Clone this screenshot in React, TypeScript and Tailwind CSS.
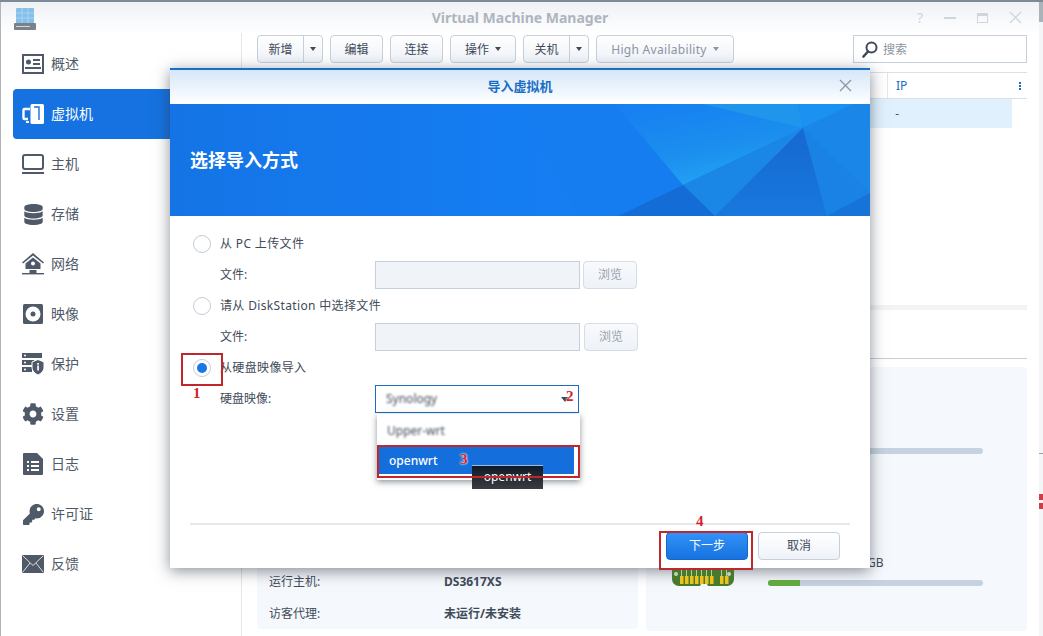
import { FaCog, FaDatabase, FaKey } from 'react-icons/fa'

const FONT = '[font-family:"Noto_Sans","Noto_Sans_CJK_SC",sans-serif]'

function OverviewIcon() {
  return (
    <svg width="22" height="20" viewBox="0 0 22 20" fill="none">
      <rect x="1" y="1" width="20" height="18" stroke="currentColor" strokeWidth="2" />
      <circle cx="6.5" cy="8" r="2.5" fill="currentColor" />
      <path d="M3 14h16" stroke="currentColor" strokeWidth="2" />
      <path d="M11 6h7M11 10h7" stroke="currentColor" strokeWidth="2" />
    </svg>
  )
}

function VmIcon() {
  return (
    <svg width="22" height="20" viewBox="0 0 22 20" fill="none">
      <path d="M8 5H2.5A1 1 0 0 0 1.5 6v8a1 1 0 0 0 1 1H6" stroke="currentColor" strokeWidth="2.4" />
      <rect x="4" y="17" width="3" height="2" fill="currentColor" />
      <path d="M10 0h10.5a1.5 1.5 0 0 1 1.5 1.5v17a1.5 1.5 0 0 1-1.5 1.5H10a1.5 1.5 0 0 1-1.5-1.5v-17A1.5 1.5 0 0 1 10 0Z" fill="currentColor" />
      <path d="M12 3h5v13" stroke="#1672e0" strokeWidth="1.4" />
    </svg>
  )
}

function HostIcon() {
  return (
    <svg width="22" height="21" viewBox="0 0 22 21" fill="none">
      <rect x="1" y="1" width="20" height="14" rx="2" stroke="currentColor" strokeWidth="2" />
      <rect x="0" y="18" width="22" height="2" fill="currentColor" />
    </svg>
  )
}

function NetworkIcon() {
  return (
    <svg width="22" height="22" viewBox="0 0 22 22" fill="none">
      <path d="M11 0 0 9.5l1 1L11 2.5l10 8 1-1Z" fill="currentColor" />
      <path d="M11 4.5 3.5 10.5V16h15v-5.500Z" fill="currentColor" />
      <circle cx="11" cy="10.500" r="2" fill="white" />
      <rect x="7.500" y="17" width="7" height="3.500" fill="currentColor" />
      <rect x="0" y="20" width="22" height="1.400" fill="currentColor" />
    </svg>
  )
}

function ImageIcon() {
  return (
    <svg width="20" height="20" viewBox="0 0 20 20">
      <rect width="20" height="20" rx="1.500" fill="currentColor" />
      <circle cx="10" cy="10" r="7.500" fill="white" />
      <circle cx="10" cy="10" r="2.500" fill="currentColor" />
    </svg>
  )
}

function ProtectIcon() {
  return (
    <svg width="22" height="22" viewBox="0 0 22 22">
      <rect x="0" y="0" width="20" height="5" fill="currentColor" />
      <rect x="0" y="7" width="12" height="5" fill="currentColor" />
      <rect x="0" y="14" width="10" height="5" fill="currentColor" />
      <path d="M16 6.500 22 9v5c0 4-3 6.500-6 8-3-1.500-6-4-6-8V9Z" fill="currentColor" stroke="white" strokeWidth="1" />
      <rect x="15.200" y="10" width="1.700" height="1.700" fill="white" />
      <rect x="15.200" y="12.500" width="1.700" height="5" fill="white" />
      <circle cx="3" cy="2.500" r="1" fill="white" />
      <circle cx="3" cy="9.500" r="1" fill="white" />
      <circle cx="3" cy="16.500" r="1" fill="white" />
    </svg>
  )
}

function LogIcon() {
  return (
    <svg width="20" height="22" viewBox="0 0 20 22">
      <path d="M1 0h13l6 6v15a1 1 0 0 1-1 1H1a1 1 0 0 1-1-1V1a1 1 0 0 1 1-1Z" fill="currentColor" />
      <path d="M4 8h2v2H4ZM8 8h8v2H8ZM4 12h2v2H4ZM8 12h8v2H8ZM4 16h2v2H4ZM8 16h8v2H8Z" fill="white" />
    </svg>
  )
}

function MailIcon() {
  return (
    <svg width="22" height="18" viewBox="0 0 22 18" fill="none">
      <rect width="22" height="18" fill="currentColor" />
      <path d="M0.500 0.500 11 10.500 21.500 0.500M0.500 17.500l7.500-9.500M21.500 17.500 14 8" stroke="white" strokeWidth="0.800" />
    </svg>
  )
}

function AppLogo() {
  return (
    <svg width="22" height="23" viewBox="0 0 22 23">
      <rect x="2" y="0" width="18" height="16" rx="1" fill="#86c0ea" />
      <path d="M2 5h18M2 10h18M8 0v16M14 0v16" stroke="#a9d3f0" strokeWidth="1" />
      <rect x="0" y="15" width="22" height="7" rx="1" fill="#7b8188" />
      <path d="M2 18.500h14" stroke="#d4d7da" strokeWidth="1" />
    </svg>
  )
}

function NavItem({ icon, label, active }: { icon: React.ReactNode; label: string; active?: boolean }) {
  return (
    <div
      className={`flex h-[50px] items-center rounded-l-[4px] pl-[9px] ${
        active ? 'bg-[#1672e0] text-white' : 'text-[#4f5967]'
      }`}
    >
      <span className="flex w-[22px] shrink-0 justify-center">{icon}</span>
      <span className="ml-[7px] pb-[2px] text-[14px]">{label}</span>
    </div>
  )
}

function ToolButton({ label, split, caret, muted }: { label: string; split?: boolean; caret?: boolean; muted?: boolean }) {
  return (
    <div
      className={`flex h-[28px] items-center justify-center whitespace-nowrap rounded-[4px] border border-[#c6d0dc] bg-gradient-to-b from-[#ffffff] to-[#eef2f8] text-[12px] ${
        muted ? 'text-[#8b95a3]' : 'text-[#3f4a59]'
      }`}
    >
      <span className={`pt-[1px] ${split ? 'flex-1 text-center' : ''} ${muted ? 'tracking-[0.3px]' : ''}`}>{label}</span>
      {caret && (
        <span
          className={`ml-[6px] h-0 w-0 border-x-[3px] border-t-[4px] border-x-transparent ${
            muted ? 'border-t-[#8b95a3]' : 'border-t-[#3f4a59]'
          }`}
        />
      )}
      {split && (
        <span className="flex h-full w-[19px] items-center justify-center border-l border-[#c6d0dc]">
          <span className="h-0 w-0 border-x-[3px] border-t-[4px] border-x-transparent border-t-[#3f4a59]" />
        </span>
      )}
    </div>
  )
}

function Radio({ checked }: { checked?: boolean }) {
  return (
    <span className="flex h-[18px] w-[18px] shrink-0 items-center justify-center rounded-full border border-[#c2ccd8] bg-white">
      {checked && <span className="h-[10px] w-[10px] rounded-full bg-[#1a77e8]" />}
    </span>
  )
}

function RadioRow({ label, checked }: { label: string; checked?: boolean }) {
  return (
    <div className="flex h-[28px] items-center gap-[9px] pl-[23px] text-[12px] text-[#414b59]">
      <Radio checked={checked} />
      <span className="tracking-[0.35px]">{label}</span>
    </div>
  )
}

function FileRow({ browseClass }: { browseClass: string }) {
  return (
    <div className="flex h-[28px] items-center pl-[50px] text-[12px] text-[#414b59]">
      <span className="w-[155px]">文件:</span>
      <span className="h-full w-[205px] border border-[#c6d0dc] bg-[#f0f3f8]" />
      <span
        className={`flex h-full w-[54px] items-center justify-center rounded-[4px] border border-[#d5dde7] bg-gradient-to-b from-[#f8fafc] to-[#eef2f8] text-[#98a2ae] ${browseClass}`}
      >
        浏览
      </span>
    </div>
  )
}

function Banner() {
  return (
    <svg className="block h-[112px] w-full" viewBox="0 0 700 112" preserveAspectRatio="none">
      <defs>
        <linearGradient id="base" x1="0" y1="0" x2="1" y2="0">
          <stop offset="0" stopColor="#1474e6" />
          <stop offset="0.5" stopColor="#157df2" />
          <stop offset="1" stopColor="#1a86ec" />
        </linearGradient>
        <linearGradient id="glow" x1="0.1" y1="0" x2="0.55" y2="1">
          <stop offset="0" stopColor="#167ff2" />
          <stop offset="0.6" stopColor="#1b8eee" />
          <stop offset="1" stopColor="#22a4f4" />
        </linearGradient>
        <linearGradient id="deep" x1="0.5" y1="0" x2="0.5" y2="1">
          <stop offset="0" stopColor="#1668cf" />
          <stop offset="1" stopColor="#1878de" />
        </linearGradient>
      </defs>
      <rect width="700" height="112" fill="url(#base)" />
      <polygon points="350,0 445,0 513,81 448,112 407,112" fill="#167df0" />
      <polygon points="445,0 533,0 633,24 513,81" fill="url(#glow)" />
      <polygon points="533,0 628,0 633,24" fill="#1f96ec" />
      <polygon points="628,0 683,0 633,24" fill="#1b92f2" />
      <polygon points="683,0 700,0 700,89 633,24" fill="#1a86e8" />
      <polygon points="633,24 513,81 545,112" fill="#1a86e6" />
      <polygon points="633,24 545,112 657,112" fill="url(#deep)" />
      <polygon points="633,24 700,89 657,112" fill="#1a82e4" />
      <polygon points="700,89 700,112 657,112" fill="#1674d8" />
      <polygon points="513,81 448,112 545,112" fill="#146dd6" />
    </svg>
  )
}

function Annotation({ className, children }: { className: string; children: React.ReactNode }) {
  return (
    <span
      className={`absolute text-[15px] font-bold leading-none text-[#d3222c] [font-family:"Liberation_Serif",serif] [text-shadow:0_0_2px_#ffffff,0_0_2px_#ffffff] ${className}`}
    >
      {children}
    </span>
  )
}

function ChipIcon() {
  const pins = [8, 13, 18, 23, 28, 33, 38, 48, 53]
  return (
    <svg width="62" height="19" viewBox="0 0 62 19">
      <path d="M0 0h62v10a7 7 0 0 1-7 7H36l-1-2h-6l-1 2H7a7 7 0 0 1-7-7Z" fill="#487a2c" />
      <circle cx="4" cy="5" r="2" fill="#c7d0c4" />
      <circle cx="57" cy="5" r="2" fill="#c7d0c4" />
      {pins.map((x) => (
        <g key={x}>
          <rect x={x + 1} y="0" width="1" height="7" fill="#b8c8a0" />
          <rect x={x} y="7" width="3.500" height="8" fill="#eec21b" />
        </g>
      ))}
    </svg>
  )
}

export default function App() {
  return (
    <div className={`relative flex h-[636px] w-[1043px] flex-col overflow-hidden bg-white ${FONT}`}>
      <div className="h-[2px] shrink-0 bg-[#7d8a96]" />
      <div className="flex min-h-0 flex-1">
        {/* desktop showing at the left edge */}
        <div className="w-px shrink-0 bg-[#b0b4b8]" />

        <div className="flex min-w-0 flex-1 flex-col">
          <div className="relative flex h-[31px] shrink-0 items-center bg-gradient-to-b from-[#eef1f5] to-[#ffffff]">
            <span className="ml-[13px] mt-[4px] w-[22px]">
              <AppLogo />
            </span>
            <span className="absolute inset-x-0 text-center text-[14px] font-bold text-[#aeb5be]">
              Virtual Machine Manager
            </span>
            <div className="relative ml-auto mr-[17px] flex items-center gap-[21px] text-[#d0d5db]">
              <span className="text-[14px] leading-none">?</span>
              <span className="h-[2px] w-[12px] bg-[#d0d5db]" />
              <span className="h-[10px] w-[11px] border-[1.500px] border-t-[3px] border-[#d0d5db]" />
              <svg width="13" height="13" viewBox="0 0 13 13" fill="none">
                <path d="M1 1l11 11M12 1 1 12" stroke="currentColor" strokeWidth="1.300" />
              </svg>
            </div>
          </div>

          <div className="flex min-h-0 flex-1">
            <nav className="w-[240px] shrink-0 pl-[12px] pt-[6px]">
              <NavItem icon={<OverviewIcon />} label="概述" />
              <NavItem icon={<VmIcon />} label="虚拟机" active />
              <NavItem icon={<HostIcon />} label="主机" />
              <NavItem icon={<FaDatabase size={21} />} label="存储" />
              <NavItem icon={<NetworkIcon />} label="网络" />
              <NavItem icon={<ImageIcon />} label="映像" />
              <NavItem icon={<ProtectIcon />} label="保护" />
              <NavItem icon={<FaCog size={22} />} label="设置" />
              <NavItem icon={<LogIcon />} label="日志" />
              <NavItem icon={<FaKey size={21} />} label="许可证" />
              <NavItem icon={<MailIcon />} label="反馈" />
            </nav>

            <main className="flex min-w-0 flex-1 flex-col border-l border-[#e3e6ea] pl-[15px] pr-[12px] pt-[2px]">
              <div className="flex h-[28px] items-center">
                <div className="flex gap-[7px]">
                  <div className="w-[66px]"><ToolButton label="新增" split /></div>
                  <div className="w-[53px]"><ToolButton label="编辑" /></div>
                  <div className="w-[53px]"><ToolButton label="连接" /></div>
                  <div className="w-[66px]"><ToolButton label="操作" caret /></div>
                  <div className="w-[66px]"><ToolButton label="关机" split /></div>
                  <div className="w-[138px]"><ToolButton label="High Availability" caret muted /></div>
                </div>
                <div className="ml-auto flex h-[28px] w-[174px] items-center gap-[5px] border border-[#c6d0dc] pl-[8px] text-[12px] text-[#8b95a3]">
                  <svg width="16" height="17" viewBox="0 0 16 17" fill="none">
                    <circle cx="9.500" cy="6.500" r="5" stroke="#3f4a59" strokeWidth="2" />
                    <path d="M6 10.500 1.500 15.500" stroke="#3f4a59" strokeWidth="2.600" strokeLinecap="round" />
                  </svg>
                  <span className="pt-[1px]">搜索</span>
                </div>
              </div>

              <div className="mt-[9px] flex h-[27px] items-center border-y border-[#dbe0e6] text-[12px] text-[#1a6ec6]">
                <span className="flex-1" />
                <span className="flex h-full w-[125px] items-center border-l border-[#e3e7ec] pl-[8px]">IP</span>
                <span className="flex w-[15px] flex-col items-center gap-[1px]">
                  <span className="h-[2px] w-[2px] bg-[#1a6ec6]" />
                  <span className="h-[2px] w-[2px] bg-[#1a6ec6]" />
                  <span className="h-[2px] w-[2px] bg-[#1a6ec6]" />
                </span>
              </div>
              <div className="mr-[15px] flex h-[29px] items-center justify-end bg-[#e0f0fd] pr-[113px] text-[12px] text-[#4f5967]">
                -
              </div>

              <div className="mt-[177px] h-[5px] shrink-0 bg-[#f2f3f5]" />
              <div className="mt-[48px] h-px shrink-0 bg-[#c9cdd2]" />

              <div className="mt-[8px] flex h-[262px] shrink-0 gap-[8px]">
                <div className="flex h-[262px] w-[381px] flex-col justify-end rounded-[3px] bg-[#f5f8fc] pl-[12px] text-[12px] text-[#414b59]">
                  <div className="flex h-[32px] items-center pt-[2px]">
                    <span className="w-[175px]">运行主机:</span>
                    <span className="font-bold">DS3617XS</span>
                  </div>
                  <div className="flex h-[32px] items-center pt-[2px]">
                    <span className="w-[175px]">访客代理:</span>
                    <span className="font-bold">未运行/未安装</span>
                  </div>
                </div>
                <div className="flex h-[264px] flex-1 flex-col rounded-[3px] bg-[#f5f8fc] pl-[122px] pr-[44px] pt-[81px] text-[12px] text-[#414b59]">
                  <div className="h-[6px] rounded-full bg-[#c6d2df]" />
                  <div className="mt-[101px] pl-[99px] leading-[16px]">GB</div>
                  <div className="mt-[9px] h-[6px] rounded-full bg-[#c6d2df]">
                    <div className="h-full w-[32px] rounded-l-full bg-[#63ad3f]" />
                  </div>
                </div>
              </div>
            </main>
          </div>
        </div>

        {/* desktop showing at the right edge */}
        <div className="flex w-[4px] shrink-0 flex-col bg-[#f4f5f6]">
          <div className="h-[20px] bg-[#aab2ba]" />
          <div className="h-[431px]" />
          <div className="h-px bg-[#9aa0a6]" />
          <div className="h-[40px]" />
          <div className="h-[6px] bg-[#cf3d46]" />
          <div className="h-[3px]" />
          <div className="h-[6px] bg-[#cf3d46]" />
        </div>
      </div>

      <section className="absolute isolate left-[170px] top-[68px] flex h-[500px] w-[700px] flex-col border-t-2 border-[#1a6ec6] bg-white shadow-[0_3px_14px_rgba(40,50,65,0.55)]">
        <header className="relative flex h-[34px] shrink-0 items-center justify-center bg-gradient-to-b from-[#d5e7f8] to-[#ffffff] pb-[1px] text-[13px] font-bold text-[#1a6ec6]">
          导入虚拟机
          <span className="absolute right-[18px] top-[9px] text-[#8b95a3]">
            <svg width="13" height="13" viewBox="0 0 13 13" fill="none">
              <path d="M1 1l11 11M12 1 1 12" stroke="currentColor" strokeWidth="1.300" />
            </svg>
          </span>
        </header>

        <div className="relative h-[112px] shrink-0">
          <Banner />
          <h1 className="absolute left-[20px] top-[44px] text-[18px] font-bold leading-[24px] text-white">选择导入方式</h1>
        </div>

        <div className="flex flex-1 flex-col gap-[3px] pt-[14px]">
          <RadioRow label="从 PC 上传文件" />
          <FileRow browseClass="ml-[3px]" />
          <RadioRow label="请从 DiskStation 中选择文件" />
          <FileRow browseClass="ml-[4px]" />
          <RadioRow label="从硬盘映像导入" checked />
          <div className="flex h-[28px] items-center pl-[50px] text-[12px] text-[#414b59]">
            <span className="w-[155px]">硬盘映像:</span>
            <div className="relative flex h-full w-[204px] items-center border border-[#1a6ec6] pl-[10px]">
              <span className="blur-[1px]">Synology</span>
              <span className="absolute right-[9px] top-[11px] h-0 w-0 border-x-[4px] border-t-[5px] border-x-transparent border-t-[#3f4a59]" />
              <div className="absolute left-[1px] top-[28px] z-10 h-[66px] w-[203px] bg-white shadow-[0_2px_6px_rgba(30,40,50,0.5)]">
                <div className="flex h-[33px] items-center pl-[10px] text-[#414b59]">
                  <span className="blur-[1px]">Upper-wrt</span>
                </div>
                <div className="ml-[2px] flex h-[27px] w-[195px] items-center bg-[#146fdc] pl-[10px] font-medium text-white">openwrt</div>
              </div>
              <div className="absolute left-[96px] top-[79px] z-10 flex h-[24px] w-[71px] items-center justify-center border-t border-[#9dbbd8] bg-gradient-to-b from-[#0f1a28] to-[#3a3d40] pb-[2px] text-white">
                openwrt
              </div>
            </div>
          </div>
        </div>

        <footer className="mx-[20px] flex h-[45px] shrink-0 items-start justify-end gap-[10px] border-t-2 border-[#e6e8eb] pt-[7px] pr-[10px]">
          <button className="h-[28px] w-[82px] rounded-[4px] border border-[#1567c8] bg-gradient-to-b from-[#3292f7] to-[#1672e0] text-[12px] text-white">
            下一步
          </button>
          <button className="h-[28px] w-[82px] rounded-[4px] border border-[#c6d0dc] bg-gradient-to-b from-[#ffffff] to-[#eef2f8] text-[12px] text-[#3f4a59]">
            取消
          </button>
        </footer>
      </section>

      {/* the chip pokes out under the dialog's next button */}
      <span className="absolute left-[672px] top-[569px]">
        <ChipIcon />
      </span>

      {/* red marks drawn on the screenshot */}
      <div className="absolute left-[181px] top-[353px] h-[33px] w-[42px] border-2 border-[#c0272d]" />
      <div className="absolute left-[377px] top-[445px] h-[33px] w-[203px] border-2 border-[#c0272d]" />
      <div className="absolute left-[659px] top-[531px] h-[39px] w-[94px] border-2 border-[#c0272d]" />
      <Annotation className="left-[193px] top-[386px]">1</Annotation>
      <Annotation className="left-[566px] top-[389px]">2</Annotation>
      <Annotation className="left-[460px] top-[452px]">3</Annotation>
      <Annotation className="left-[696px] top-[514px]">4</Annotation>
    </div>
  )
}
